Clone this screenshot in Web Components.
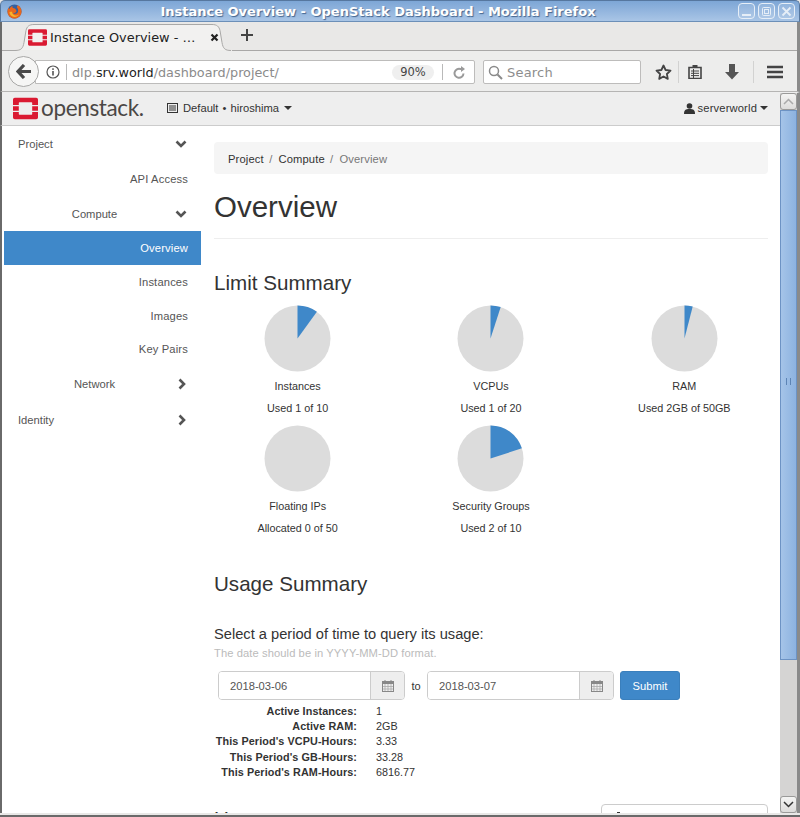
<!DOCTYPE html>
<html>
<head>
<meta charset="utf-8">
<title>Instance Overview</title>
<style>
html, body { margin: 0; padding: 0; height: 817px; overflow: hidden; background: #e9e8e7; }
</style>
</head>
<body>
<fx-window>
  <fx-titlebar>Instance Overview - OpenStack Dashboard - Mozilla Firefox</fx-titlebar>
  <fx-tabbar>Instance Overview - …</fx-tabbar>
  <fx-navbar></fx-navbar>
  <os-topbar></os-topbar>
  <fx-scroll></fx-scroll>
  <os-sidebar>
    <os-nav-item level="0" arrow="down">Project</os-nav-item>
    <os-nav-item level="2" style="margin-top:1px">API Access</os-nav-item>
    <os-nav-item level="1" arrow="down">Compute</os-nav-item>
    <os-nav-item level="2" active>Overview</os-nav-item>
    <os-nav-item level="2">Instances</os-nav-item>
    <os-nav-item level="2">Images</os-nav-item>
    <os-nav-item level="2" style="margin-top:-1px">Key Pairs</os-nav-item>
    <os-nav-item level="1" arrow="right">Network</os-nav-item>
    <os-nav-item level="0" arrow="right">Identity</os-nav-item>
  </os-sidebar>
  <os-overview></os-overview>
</fx-window>

<script>
// small helper so every class can set up its shadow root the same way
function shadow(el, html) {
    const sd = el.attachShadow({ mode: 'open' });
    sd.innerHTML = html;
    return sd;
}

const osLogo = (w, h) => `<svg width="${w}" height="${h}" viewBox="0 0 28 24">
  <path fill="#da1a32" d="M2 0h24a2 2 0 0 1 2 2v6h-6.500V5.800a.8.8 0 0 0-.8-.8H7.300a.8.8 0 0 0-.8.800V8H0V2a2 2 0 0 1 2-2zM0 16h6.500v2.200a.8.8 0 0 0 .8.800h13.400a.8.8 0 0 0 .8-.8V16H28v6a2 2 0 0 1-2 2H2a2 2 0 0 1-2-2zM0 9.500h6.500v5H0zM21.500 9.500H28v5h-6.500z"/>
</svg>`;

class FxWindow extends HTMLElement {
    connectedCallback() {
        shadow(this, `<style>
        :host { display: grid; grid-template-columns: 201px 579px 20px; grid-template-rows: 22px 29px 41px 34px 687px;
                height: 817px; box-sizing: border-box; background: #e9e8e7; overflow: hidden; border-bottom: 2px solid #6a6a6a; padding-bottom: 2px; }
        ::slotted(fx-titlebar), ::slotted(fx-tabbar), ::slotted(fx-navbar) { grid-column: 1 / 4; }
        ::slotted(os-topbar) { grid-column: 1 / 3; }
        ::slotted(fx-scroll) { grid-column: 3; grid-row: 4 / 6; }
        </style><slot></slot>`);
    }
}

class FxTitlebar extends HTMLElement {
    connectedCallback() {
        shadow(this, `<style>
        :host { display: flex; align-items: center; height: 22px; box-sizing: border-box; padding: 0 4px 0 6px;
                background: linear-gradient(#7da6d6, #a9c5e6); border: 1px solid #56779f; border-bottom-color: #6c8fb8;
                border-radius: 5px 5px 0 0; }
        .title { flex: 1; text-align: center; font: bold 13px "DejaVu Sans", sans-serif; color: #fff;
                 text-shadow: 1px 1px 1px #44658f; padding-right: 4px; }
        .btns { display: flex; gap: 3px; }
        .btn { width: 17px; height: 16px; box-sizing: border-box; border: 1px solid #e6eef7; border-radius: 4px; display: flex;
               align-items: center; justify-content: center; background: rgba(255,255,255,.12); }
        </style>
        <svg width="15" height="15" viewBox="0 0 16 16">
          <circle cx="8" cy="8" r="7.500" fill="#35609f"/>
          <path fill="#e8661c" d="M11.500 1.300c2.300 1.300 4 3.800 4 6.700 0 4.200-3.300 7.500-7.500 7.500S.5 12.200.5 8c0-1.700.5-3.200 1.400-4.400.1.800.4 1.300.9 1.700C3.200 3.700 4.400 2.500 6 2.100 5.600 3 5.800 3.800 6.400 4.300c1.900.2 3.500 1.500 3.700 3.400-.3 1.500-2 2.200-3.500 1.800 1 1.300 3.700 1.400 4.900-.7.800-1.700.4-3.600-.9-5-.1-.8.100-1.600.9-2.500z"/>
          <path fill="#f7b52c" d="M2.600 8.600c.2 2.900 2.500 5.200 5.400 5.200 2.100 0 3.900-1.100 4.800-2.900-1.200 1.300-3.200 1.800-5 1.100C6.200 11.300 5.300 9.800 5.500 8.300c-1 0-2 0-2.900.3z"/>
        </svg>
        <span class="title"><slot></slot></span>
        <span class="btns">
          <span class="btn"><svg width="11" height="11"><rect x="1" y="8" width="9" height="2" fill="#e6eef7"/></svg></span>
          <span class="btn"><svg width="11" height="11"><rect x="1.500" y="1.500" width="8" height="8" rx="1" fill="none" stroke="#e6eef7"/><rect x="3.500" y="3.500" width="4" height="4" fill="none" stroke="#e6eef7"/></svg></span>
          <span class="btn"><svg width="11" height="11"><path d="M1.500 1.500l8 8M9.500 1.500l-8 8" stroke="#e6eef7" stroke-width="1.800"/></svg></span>
        </span>`);
    }
}

class FxTabbar extends HTMLElement {
    connectedCallback() {
        shadow(this, `<style>
        :host { display: flex; height: 29px; background: #e9e8e7; box-sizing: border-box;
                border-left: 2px solid #6a6a6a; border-right: 3px solid #8a8a8a; position: relative; padding-left: 13px; }
        :host::after { content: ""; position: absolute; left: 230px; right: 0; bottom: 0; height: 1px; background: #a9a8a7; }
        .line0 { position: absolute; left: 0; width: 14px; bottom: 0; height: 1px; background: #a9a8a7; }
        .tab { width: 217px; height: 29px; position: relative; display: flex; align-items: center; box-sizing: border-box; padding: 2px 0 0 13px; }
        .shape { position: absolute; left: 0; top: 0; }
        .ico, .txt, .x { position: relative; }
        .ico { display: flex; }
        .txt { font: 12.900px "DejaVu Sans", sans-serif; color: #222; margin-left: 3px; width: 161px; white-space: nowrap; }
        .x { display: flex; margin-left: -1px; }
        .plus { margin: 6px 0 0 8px; display: block; }
        </style>
        <span class="line0"></span>
        <div class="tab">
          <svg class="shape" width="217" height="29" viewBox="0 0 217 29">
            <path d="M0 28.500c6 0 8-2 9-8l2-12c1-4 3-6 8-6h178c5 0 7 2 8 6l2 12c1 6 3 8 9 8" fill="#f2f1f0" stroke="#a9a8a7"/>
          </svg>
          <span class="ico">${osLogo(19, 17)}</span>
          <span class="txt"><slot></slot></span>
          <svg class="x" width="9" height="9"><path d="M1.500 1.500l6 6M7.500 1.500l-6 6" stroke="#222" stroke-width="2.200"/></svg>
        </div>
        <svg class="plus" width="14" height="14"><path d="M7 1v12M1 7h12" stroke="#444" stroke-width="2"/></svg>`);
    }
}

class FxNavbar extends HTMLElement {
    connectedCallback() {
        shadow(this, `<style>
        :host { display: flex; align-items: center; height: 41px; box-sizing: border-box; background: #ededec; padding-top: 1px;
                border-left: 2px solid #6a6a6a; border-right: 3px solid #8a8a8a; border-bottom: 1px solid #b5b4b3;
                font-family: "DejaVu Sans", sans-serif; position: relative; }
        .back { position: absolute; left: 6px; top: 5px; width: 31px; height: 31px; box-sizing: border-box; border-radius: 50%;
                background: #f6f6f5; border: 1px solid #a8a8a7; display: flex; align-items: center; justify-content: center; z-index: 1; }
        .url { margin-left: 33px; width: 440px; height: 24px; box-sizing: border-box; background: #fff; border: 1px solid #bdbcbb; border-radius: 0 2px 2px 0;
               display: flex; align-items: center; padding: 1px 0 0 10px; font-size: 12.800px; color: #8b8b8b; white-space: nowrap; }
        .url b { font-weight: normal; color: #222; }
        .sep { width: 1px; height: 16px; background: #b9b9b9; margin: 0 5px 0 6px; }
        .addr { flex: 1; }
        .zoom { width: 42px; height: 15px; line-height: 15px; background: #efefef; border-radius: 8px; color: #444; font-size: 11.500px; text-align: center; margin-right: 8px; }
        .reload { margin: 0 9px 0 10px; display: block; }
        .search { margin-left: 8px; width: 158px; height: 24px; box-sizing: border-box; background: #fff; border: 1px solid #bdbcbb; border-radius: 2px;
                  display: flex; align-items: center; padding: 1px 0 0 4px; font-size: 13px; color: #8d8d8d; gap: 4px; letter-spacing: .2px; }
        .tools { margin-left: 14px; display: flex; align-items: center; }
        .div { width: 1px; height: 22px; background: #d2d2d1; }
        </style>
        <span class="back">
          <svg width="16" height="15" viewBox="0 0 16 15"><path d="M8 1L2 7.500 8 14M2.500 7.500H15" fill="none" stroke="#4a4a4a" stroke-width="3.200"/></svg>
        </span>
        <div class="url">
          <svg width="14" height="14" viewBox="0 0 14 14"><circle cx="7" cy="7" r="6" fill="none" stroke="#555" stroke-width="1.200"/><rect x="6.200" y="6" width="1.600" height="4.500" fill="#555"/><rect x="6.200" y="3.300" width="1.600" height="1.600" fill="#555"/></svg>
          <span class="sep"></span>
          <span class="addr">dlp.<b>srv.world</b>/dashboard/project/</span>
          <span class="zoom">90%</span>
          <span class="sep" style="margin:0"></span>
          <svg class="reload" width="12" height="13" viewBox="0 0 12 13"><path d="M10.500 7.500A4.500 4.500 0 1 1 7.500 3H10" fill="none" stroke="#9a9a9a" stroke-width="2"/><path d="M8 0l4 3-4 3z" fill="#9a9a9a"/></svg>
        </div>
        <div class="search">
          <svg width="15" height="15" viewBox="0 0 15 15"><circle cx="6" cy="6" r="4.500" fill="none" stroke="#8a8a8a" stroke-width="1.500"/><path d="M9.500 9.500l4.500 4.500" stroke="#8a8a8a" stroke-width="2"/></svg>
          <span>Search</span>
        </div>
        <div class="tools">
          <svg width="17" height="16" viewBox="0 0 17 16"><path d="M8.500 1.500l2.100 4.500 4.900.6-3.600 3.400.9 4.900-4.300-2.400-4.300 2.400.9-4.900L1.500 6.600l4.900-.6z" fill="none" stroke="#444" stroke-width="1.800" stroke-linejoin="round"/></svg>
          <span class="div" style="margin:0 9px 0 6px"></span>
          <svg width="14" height="15" viewBox="0 0 14 15"><path d="M1 3.500h12v11H1z" fill="none" stroke="#444" stroke-width="1.600"/><path d="M4.500 1h5v3h-5z" fill="#444"/><path d="M3 7h8M3 9.300h8M3 11.600h8" stroke="#444"/><path d="M5.500 5v9" stroke="#444"/></svg>
          <svg style="margin-left:23px" width="14" height="16" viewBox="0 0 14 16"><path d="M4 0h6v8h4l-7 7.500L0 8h4z" fill="#555"/></svg>
          <span class="div" style="margin:0 13px 0 14px"></span>
          <svg width="16" height="14" viewBox="0 0 16 14"><path d="M0 2h16M0 7h16M0 12h16" stroke="#444" stroke-width="2.400"/></svg>
        </div>`);
    }
}

class FxScroll extends HTMLElement {
    connectedCallback() {
        shadow(this, `<style>
        :host { display: flex; flex-direction: column; background: #d5d4d3; border-right: 3px solid #8a8a8a; border-top: 1px solid #eee; box-sizing: border-box; height: 721px; }
        .btn { height: 17px; flex: none; box-sizing: border-box; background: linear-gradient(#f4f4f3, #dddcdb); border: 1px solid #9a9a99; border-radius: 3px; display: flex; align-items: center; justify-content: center; }
        .thumb { height: 550px; flex: none; background: linear-gradient(90deg, #a5c4e8, #8cb2e0); border: 1px solid #6d93c4; box-sizing: border-box; display: flex; align-items: center; justify-content: center; padding-bottom: 8px; }
        .thumb em { display: block; width: 3px; height: 7px; border-left: 1px solid #5d84b5; border-right: 1px solid #5d84b5; }
        .rest { flex: 1; }
        </style>
        <div class="btn"><svg width="11" height="7"><path d="M1 6l4.500-4.500L10 6" fill="none" stroke="#aaa" stroke-width="1.500"/></svg></div>
        <div class="thumb"><em></em></div>
        <div class="rest"></div>
        <div class="btn"><svg width="11" height="7"><path d="M1 1l4.500 4.500L10 1" fill="none" stroke="#333" stroke-width="1.500"/></svg></div>`);
    }
}

class OsTopbar extends HTMLElement {
    connectedCallback() {
        shadow(this, `<style>
        :host { display: flex; align-items: center; height: 34px; box-sizing: border-box; background: #eee; border-left: 2px solid #6a6a6a;
                border-bottom: 1px solid #ccc; padding: 0 0 1px 11px; font: 11.200px "Liberation Sans", sans-serif; color: #333; }
        .word { font: 22.500px "Lato", sans-serif; color: #4b4745; margin: -2px 0 0 3px; letter-spacing: -.35px; width: 103px; white-space: nowrap; }
        .proj { display: flex; align-items: center; margin-left: 23px; gap: 5px; word-spacing: 1px; }
        .caret { display: inline-block; border: 4px solid transparent; border-top-color: #333; border-bottom: 0; margin-left: 0; }
        .user { margin-left: auto; margin-right: 12px; display: flex; align-items: center; gap: 3px; letter-spacing: .15px; }
        </style>
        ${osLogo(25, 23)}
        <span class="word">openstack.</span>
        <span class="proj">
          <svg width="11" height="10" viewBox="0 0 11 10"><rect x=".5" y=".5" width="10" height="9" fill="none" stroke="#333"/><path d="M2 3h7M2 5h7M2 7h7" stroke="#333"/></svg>
          <span>Default • hiroshima</span><span class="caret"></span>
        </span>
        <span class="user">
          <svg width="11" height="11" viewBox="0 0 11 11"><circle cx="5.500" cy="3" r="2.800" fill="#333"/><path d="M0 11c0-4 1.500-5 5.500-5s5.500 1 5.500 5z" fill="#333"/></svg>
          <span>serverworld</span><span class="caret"></span>
        </span>`);
    }
}

class OsSidebar extends HTMLElement {
    connectedCallback() {
        shadow(this, `<style>
        :host { display: flex; flex-direction: column; background: #fff; border-left: 2px solid #6a6a6a; padding: 1px 0 0 2px; box-sizing: border-box; height: 687px; }
        </style><slot></slot>`);
    }
}

class OsNavItem extends HTMLElement {
    connectedCallback() {
        const arrow = this.getAttribute('arrow');
        let ico = '';
        if (arrow == 'down') ico = '<svg class="arr" width="12" height="8" viewBox="0 0 12 8"><path d="M1.500 1.500L6 6l4.500-4.500" fill="none" stroke="#555" stroke-width="2.600"/></svg>';
        if (arrow == 'right') ico = '<svg class="arr" style="right:15px" width="8" height="12" viewBox="0 0 8 12"><path d="M1.500 1.500L6 6l-4.500 4.500" fill="none" stroke="#555" stroke-width="2.600"/></svg>';
        shadow(this, `<style>
        :host { display: flex; align-items: center; height: 34px; position: relative; font: 11.200px "Liberation Sans", sans-serif; color: #555; box-sizing: border-box; }
        :host([active]) { background: #3f88c9; color: #fff; }
        .label { flex: 1; padding-right: 13px; text-align: right; letter-spacing: .15px; }
        :host([level="0"]) .label { text-align: left; padding-left: 14px; letter-spacing: 0; }
        :host([level="1"]) .label { text-align: center; padding: 0 16px 0 0; letter-spacing: 0; }
        :host([level="1"]) { margin-top: 1px; }
        :host([level="0"]:last-child) { margin-top: 2px; }
        .arr { position: absolute; right: 14px; top: 50%; transform: translateY(-50%); }
        </style><span class="label"><slot></slot></span>${ico}`);
    }
}

class PieStat extends HTMLElement {
    connectedCallback() {
        const used = Number(this.getAttribute('used'));
        const total = Number(this.getAttribute('total'));
        const a = used / total * Math.PI * 2;
        const x = 33.500 + 33 * Math.sin(a);
        const y = 33.500 - 33 * Math.cos(a);
        const slice = used ? `<path d="M33.500 33.500V.5A33 33 0 ${a > Math.PI ? 1 : 0} 1 ${x.toFixed(2)} ${y.toFixed(2)}z" fill="#3f88c9"/>` : '';
        shadow(this, `<style>
        :host { display: flex; flex-direction: column; align-items: center; height: 120px; font: 10.800px "Liberation Sans", sans-serif; color: #333; }
        svg { display: block; }
        .name { margin-top: 3px; line-height: 22px; }
        .sub { line-height: 22px; }
        </style>
        <svg width="67" height="67" viewBox="0 0 67 67"><circle cx="33.500" cy="33.500" r="33" fill="#dcdcdc"/>${slice}</svg>
        <div class="name">${this.getAttribute('name')}</div>
        <div class="sub"><slot></slot></div>`);
    }
}

class DateField extends HTMLElement {
    connectedCallback() {
        shadow(this, `<style>
        :host { display: flex; height: 29px; box-sizing: border-box; border: 1px solid #ccc; border-radius: 4px; width: 187px; overflow: hidden; font: 11.200px "Liberation Sans", sans-serif; color: #555; }
        .v { width: 151px; box-sizing: border-box; display: flex; align-items: center; padding-left: 11px; background: #fff; }
        .cal { flex: 1; background: #eee; border-left: 1px solid #ccc; display: flex; align-items: center; justify-content: center; }
        </style>
        <span class="v"><slot></slot></span>
        <span class="cal"><svg width="12" height="12" viewBox="0 0 12 12"><rect x=".5" y="1.500" width="11" height="10" fill="none" stroke="#888"/><rect x="0" y="1" width="12" height="3" fill="#888"/><path d="M3 4v7M6 4v7M9 4v7M1 6.500h10M1 9h10" stroke="#aaa" stroke-width=".8"/><path d="M3 0v2M9 0v2" stroke="#888"/></svg></span>`);
    }
}

class UsageRow extends HTMLElement {
    connectedCallback() {
        shadow(this, `<style>
        :host { display: grid; grid-template-columns: 143px 1fr; column-gap: 19px; height: 15.200px; font: 10.800px/15.200px "Liberation Sans", sans-serif; color: #333; }
        b { text-align: right; letter-spacing: .1px; }
        </style><b>${this.getAttribute('label')}</b><span><slot></slot></span>`);
    }
}

class OsOverview extends HTMLElement {
    connectedCallback() {
        shadow(this, `<style>
        :host { display: block; background: #fff; height: 687px; font-family: "Liberation Sans", sans-serif; color: #333; overflow: hidden; }
        .main { padding: 16px 12px 0 13px; }
        .crumb { background: #f5f5f5; border-radius: 4px; height: 32px; display: flex; align-items: center; padding: 2px 0 0 14px; box-sizing: border-box; font-size: 11.200px; color: #333; letter-spacing: .15px; }
        .crumb i { font-style: normal; color: #777; margin: 0 6px 0 2px; }
        .crumb span { color: #777; }
        h1 { font-weight: 400; font-size: 29.500px; margin: 16px 0 0; line-height: 33px; padding-bottom: 15px; border-bottom: 1px solid #eee; }
        h2 { font-weight: 400; font-size: 20.600px; margin: 0; line-height: 24px; }
        .limit { margin-top: 32px; }
        .pies { display: grid; grid-template-columns: repeat(3, 1fr); margin: 10px -13px 0 -13px; }
        .usage { margin-top: 27px; }
        .q { margin-top: 29px; font-size: 14.670px; line-height: 18px; }
        .hint { font-size: 11.200px; color: #bbb; line-height: 14px; margin-top: 3px; letter-spacing: .08px; }
        form { display: flex; align-items: center; margin: 11px 0 0 4px; font-size: 11px; }
        .to { width: 22px; text-align: center; }
        .go { margin-left: 6px; background: #3f88c9; color: #fff; border: 1px solid #3a7fbc; border-radius: 3px; height: 29px; width: 60px; box-sizing: border-box; display: flex; align-items: center; justify-content: center; font-size: 11.200px; }
        .rows { margin-top: 4px; }
        .next { display: flex; justify-content: space-between; margin-top: 24px; }
        .next h3 { margin: 3px 0 0; font-weight: 400; font-size: 20.600px; line-height: 24px; }
        .csv { width: 167px; height: 30px; box-sizing: border-box; border: 1px solid #ccc; border-radius: 4px; padding: 7px 0 0 15px; }
        .csv svg { display: block; }
        </style>
        <div class="main">
          <div class="crumb">Project<i>&nbsp;/</i>Compute<i>&nbsp;/</i><span>Overview</span></div>
          <h1>Overview</h1>
          <div class="limit">
            <h2>Limit Summary</h2>
            <div class="pies">
              <pie-stat name="Instances" used="1" total="10">Used 1 of 10</pie-stat>
              <pie-stat name="VCPUs" used="1" total="20">Used 1 of 20</pie-stat>
              <pie-stat name="RAM" used="2" total="50">Used 2GB of 50GB</pie-stat>
              <pie-stat name="Floating IPs" used="0" total="50">Allocated 0 of 50</pie-stat>
              <pie-stat name="Security Groups" used="2" total="10">Used 2 of 10</pie-stat>
            </div>
          </div>
          <div class="usage">
            <h2>Usage Summary</h2>
            <div class="q">Select a period of time to query its usage:</div>
            <div class="hint">The date should be in YYYY-MM-DD format.</div>
            <form>
              <date-field>2018-03-06</date-field>
              <span class="to">to</span>
              <date-field>2018-03-07</date-field>
              <span class="go">Submit</span>
            </form>
            <div class="rows">
              <usage-row label="Active Instances:">1</usage-row>
              <usage-row label="Active RAM:">2GB</usage-row>
              <usage-row label="This Period's VCPU-Hours:">3.33</usage-row>
              <usage-row label="This Period's GB-Hours:">33.28</usage-row>
              <usage-row label="This Period's RAM-Hours:">6816.77</usage-row>
            </div>
            <div class="next">
              <h3>Usage</h3>
              <div class="csv"><svg width="4" height="4"><rect x="0" y="0" width="3" height="4" fill="#333"/></svg></div>
            </div>
          </div>
        </div>`);
    }
}

customElements.define('fx-window', FxWindow);
customElements.define('fx-titlebar', FxTitlebar);
customElements.define('fx-tabbar', FxTabbar);
customElements.define('fx-navbar', FxNavbar);
customElements.define('fx-scroll', FxScroll);
customElements.define('os-topbar', OsTopbar);
customElements.define('os-sidebar', OsSidebar);
customElements.define('os-nav-item', OsNavItem);
customElements.define('pie-stat', PieStat);
customElements.define('date-field', DateField);
customElements.define('usage-row', UsageRow);
customElements.define('os-overview', OsOverview);
</script>
</body>
</html>
